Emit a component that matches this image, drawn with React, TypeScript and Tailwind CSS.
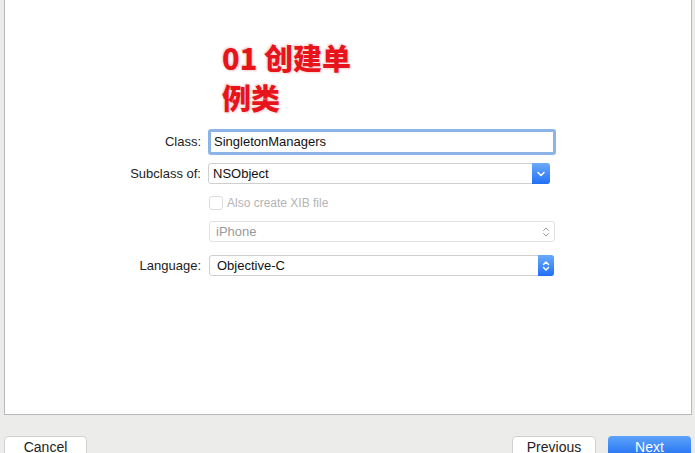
import { ChevronDown, ChevronsUpDown } from 'lucide-react'

function Label({ text }: { text: string }) {
  return <div className="w-[203px] shrink-0 pr-[7px] text-right text-[13px] text-[#222]">{text}</div>
}

export default function App() {
  return (
    <div
      className="flex h-[453px] w-[695px] flex-col overflow-hidden bg-[#ececea]"
      style={{ fontFamily: '"Liberation Sans", Arial, sans-serif' }}
    >
      <div className="ml-[4px] mr-[3px] h-[415px] shrink-0 border border-t-0 border-[#b9b9b9] bg-white">
        <div
          className="ml-[217px] pt-[37px] text-[29px] font-black leading-[40px] text-[#e8141c]"
          style={{
            fontFamily: '"Noto Sans CJK SC", "Liberation Sans", sans-serif',
            textShadow: '0 0 2px #fff, 1px 1px 2px #f2c6c6, -1px -1px 2px #f2c6c6',
          }}
        >
          <div>01 创建单</div>
          <div>例类</div>
        </div>

        <div className="mt-[12px] flex items-center">
          <Label text="Class:" />
          <div className="flex h-[26px] w-[348px] items-center rounded-[3px] border-[3px] border-[#8db4e8] bg-white pl-[3px] text-[13px] text-[#111]">
            SingletonManagers
          </div>
        </div>

        <div className="mt-[8px] flex items-center">
          <Label text="Subclass of:" />
          <div className="flex h-[21px] w-[342px] items-center rounded-[3px] border border-[#cfcfcf] bg-white pl-[4px] text-[13px] text-[#111]">
            <span className="flex-1">NSObject</span>
            <div className="-mr-px flex h-[21px] w-[18px] items-center justify-center rounded-r-[3px] bg-gradient-to-b from-[#6aa9fb] to-[#1f6ff5]">
              <ChevronDown className="h-[12px] w-[12px] text-white" strokeWidth={3} />
            </div>
          </div>
        </div>

        <div className="mt-[10px] flex items-center">
          <div className="w-[203px] shrink-0" />
          <div className="ml-[1px] h-[14px] w-[14px] rounded-[3px] border border-[#dcdcdc] bg-white" />
          <span className="ml-[4px] text-[12px] text-[#b4b4b4]">Also create XIB file</span>
        </div>

        <div className="mt-[9px] flex items-center">
          <div className="w-[203px] shrink-0" />
          <div className="ml-[1px] flex h-[21px] w-[346px] items-center rounded-[3px] border border-[#e2e2e2] bg-white pl-[6px] text-[13px] text-[#9a9a9a]">
            <span className="flex-1">iPhone</span>
            <ChevronsUpDown className="mr-[2px] h-[12px] w-[12px] text-[#9a9a9a]" strokeWidth={2} />
          </div>
        </div>

        <div className="mt-[13px] flex items-center">
          <Label text="Language:" />
          <div className="ml-[1px] flex h-[21px] w-[345px] items-center rounded-[3px] border border-[#cfcfcf] bg-white pl-[7px] text-[13px] text-[#111]">
            <span className="flex-1">Objective-C</span>
            <div className="-mr-px flex h-[21px] w-[16px] items-center justify-center rounded-r-[3px] bg-gradient-to-b from-[#6aa9fb] to-[#1f6ff5]">
              <ChevronsUpDown className="h-[12px] w-[12px] text-white" strokeWidth={3} />
            </div>
          </div>
        </div>
      </div>

      <div className="mt-[21px] flex px-[4px]">
        <button className="h-[22px] w-[83px] rounded-[4px] border border-[#d0d0d0] bg-white text-[14px] leading-[19px] text-[#222]">
          Cancel
        </button>
        <div className="flex-1" />
        <button className="mr-[12px] h-[22px] w-[84px] rounded-[4px] border border-[#d0d0d0] bg-white text-[14px] leading-[19px] text-[#222]">
          Previous
        </button>
        <button className="h-[22px] w-[83px] rounded-[4px] bg-gradient-to-b from-[#5ea3fa] to-[#1a6cf2] text-[14px] leading-[19px] text-white">
          Next
        </button>
      </div>
    </div>
  )
}
